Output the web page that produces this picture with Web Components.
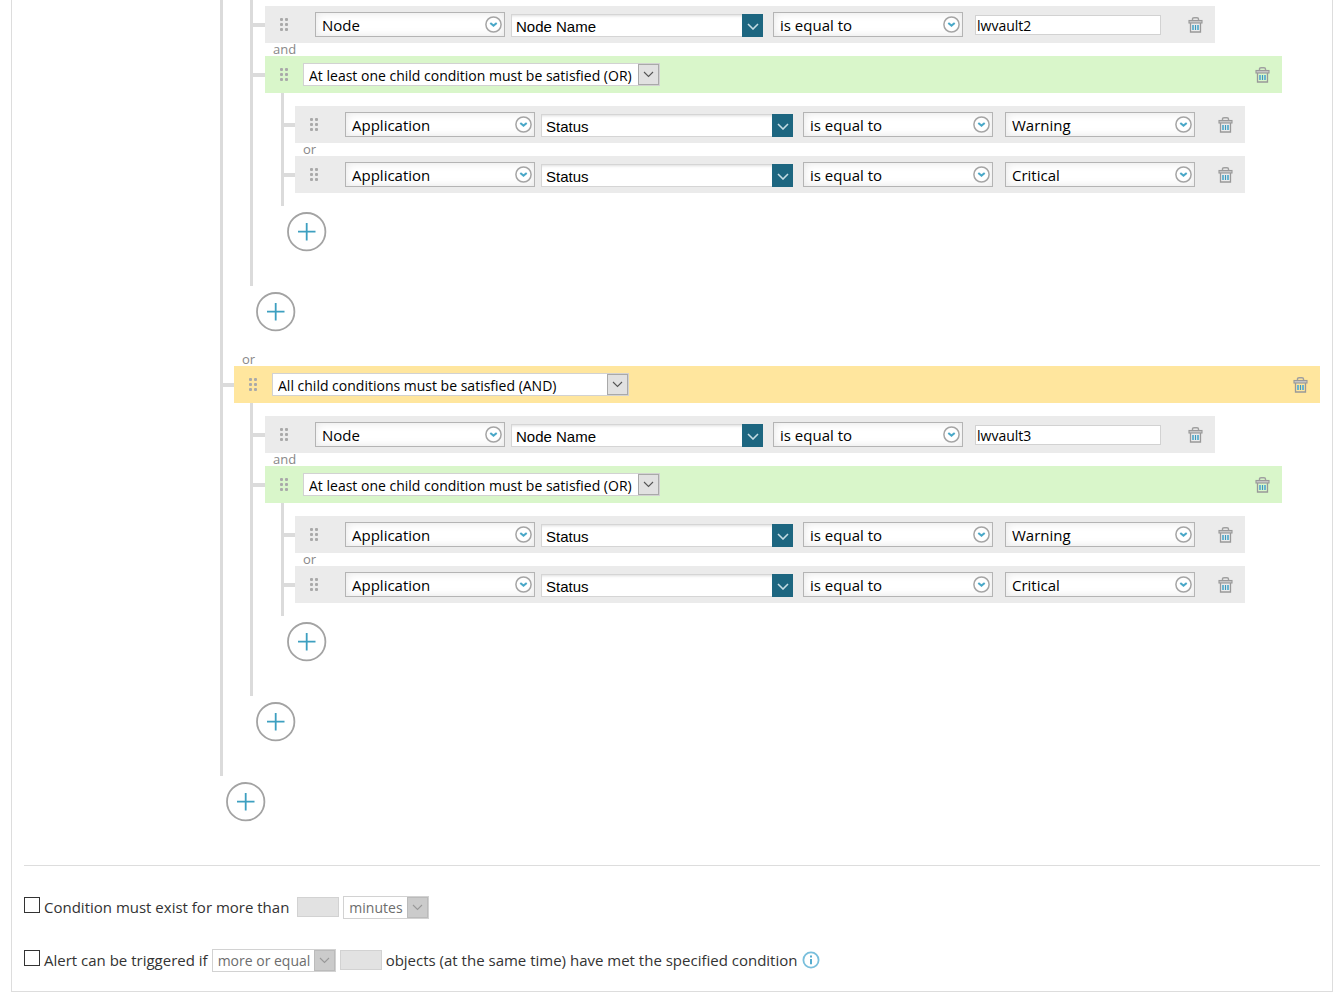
<!DOCTYPE html>
<html lang="en">
<head>
<meta charset="utf-8">
<title>Alert trigger conditions</title>
<style>
  body { margin: 0 9px 6px 11px; background: #fff; color: #333; font: 15px/20px "Open Sans", "Noto Sans", sans-serif; }
</style>
</head>
<body>
<trigger-card>
  <condition-group root>
    <condition-group>
      <condition-row continued object="Node" field="Node Name" text="lwvault2"></condition-row>
      <condition-group nested joiner="and" tone="any" rule="At least one child condition must be satisfied (OR)">
        <condition-row object="Application" field="Status" choice="Warning"></condition-row>
        <condition-row joiner="or" object="Application" field="Status" choice="Critical"></condition-row>
      </condition-group>
    </condition-group>
    <condition-group joiner="or" tone="all" rule="All child conditions must be satisfied (AND)">
      <condition-row object="Node" field="Node Name" text="lwvault3"></condition-row>
      <condition-group nested joiner="and" tone="any" rule="At least one child condition must be satisfied (OR)">
        <condition-row object="Application" field="Status" choice="Warning"></condition-row>
        <condition-row joiner="or" object="Application" field="Status" choice="Critical"></condition-row>
      </condition-group>
    </condition-group>
  </condition-group>
  <trigger-option slot="options" name="duration">
    <span slot="label">Condition must exist for more than</span>
    <count-box slot="controls" label="Duration"></count-box>
    <plain-select slot="controls" size="short" value="minutes" label="Duration unit" disabled></plain-select>
  </trigger-option>
  <trigger-option slot="options" name="count" tight>
    <span slot="label">Alert can be triggered if</span>
    <plain-select slot="controls" size="medium" value="more or equal" label="Comparison" disabled></plain-select>
    <count-box slot="controls" label="Number of objects"></count-box>
    <span slot="controls">objects (at the same time) have met the specified condition</span>
    <info-mark slot="controls"></info-mark>
  </trigger-option>
</trigger-card>

<script>
class Part extends HTMLElement {
  connectedCallback() {
    if (this.shadowRoot) return;
    this.attachShadow({ mode: "open" }).innerHTML =
      `<style>*{box-sizing:border-box}${this.css()}</style>${this.html()}`;
  }
  attr(name) { return this.getAttribute(name) || ""; }
}

customElements.define("trigger-card", class extends Part {
  css() { return `
    :host { display: block; border: 1px solid #ddd; border-top: 0; padding: 0 12px 19px; }
    .tree { margin-left: 196px; }
    hr { border: 0; border-top: 1px solid #ddd; margin: 22px 0 29px; }
    .options { display: flex; flex-direction: column; gap: 29px; }`; }
  html() { return `<div class="tree"><slot></slot></div><hr><div class="options"><slot name="options"></slot></div>`; }
});

/* --reach is the length of the connector from the parent's line to an item. */
const joinerCss = `
  .joiner { height: 13px; padding-left: 8px; font-size: 13px; line-height: 12px; color: #888; }
  .branch { display: flex; align-items: center; margin-left: calc(-1 * var(--reach)); }
  .branch::before { content: ""; flex: none; width: var(--reach); height: 4px; background: #dbdbdb; }`;

customElements.define("condition-group", class extends Part {
  css() { return `${joinerCss}
    :host { display: block; }
    .bar { flex: 1; display: flex; align-items: center; height: 37px; padding: 0 12px 0 15px; background: var(--tone); }
    :host([tone=any]) { --tone: #d9f6ca; }
    :host([tone=all]) { --tone: #ffe69e; }
    :host([nested]) .branch { margin-right: 38px; }
    drag-grip { margin-right: 15px; }
    trash-button { margin-left: auto; }
    .children { --reach: 12px; border-left: 3px solid #dbdbdb; padding: 0 0 13px var(--reach); }
    :host([root]) .children, :host([nested]) .children { --reach: 11px; }
    .body { margin-left: 16px; }
    :host([root]) .body { margin-left: 0; }
    add-button { padding: 6px 0 21px 6px; }`; }
  html() {
    const head = this.hasAttribute("rule") ? `<div class="joiner">${this.attr("joiner")}</div>
      <div class="branch"><div class="bar"><drag-grip></drag-grip>
      <plain-select size="long" value="${this.attr("rule")}" label="Group rule"></plain-select>
      <trash-button></trash-button></div></div>` : "";
    return `${head}<div class="body"><div class="children"><slot></slot></div><add-button></add-button></div>`;
  }
});

customElements.define("condition-row", class extends Part {
  css() { return `${joinerCss}
    :host { display: block; }
    :host([continued]) .joiner { height: 6px; }
    .bar { display: grid; grid-template-columns: 35px 190px 6px 252px 10px 190px 12px 190px 23px 14px;
      align-items: center; height: 37px; padding: 0 13px 0 15px; background: #ebebeb; }
    drag-grip { grid-column: 1; } .object { grid-column: 2; } combo-box { grid-column: 4; }
    .operator { grid-column: 6; } .value { grid-column: 8; } trash-button { grid-column: 10; }
    input { width: 186px; height: 20px; border: 1px solid #d2d2d2; padding: 1px 1px 0; background: #fff; color: #000;
      font: 14px/17px "Open Sans", sans-serif; }`; }
  html() {
    const value = this.hasAttribute("choice")
      ? `<round-select class="value" value="${this.attr("choice")}" label="Value"></round-select>`
      : `<input class="value" type="text" aria-label="Value" value="${this.attr("text")}">`;
    return `<div class="joiner">${this.attr("joiner")}</div><div class="branch"><div class="bar">
      <drag-grip></drag-grip>
      <round-select class="object" value="${this.attr("object")}" label="Object type"></round-select>
      <combo-box value="${this.attr("field")}"></combo-box>
      <round-select class="operator" value="is equal to" label="Operator"></round-select>
      ${value}<trash-button></trash-button></div></div>`;
  }
});

customElements.define("round-select", class extends Part {
  css() { return `
    :host { display: grid; align-items: center; }
    select, svg { grid-area: 1 / 1; }
    select { appearance: none; width: 100%; height: 25px; border: 1px solid #b4b4b4; border-radius: 0; padding: 1px 26px 0 6px;
      background: #fff; box-shadow: inset 0 0 8px #e4e4e4; color: #000; font: 15px/20px "Open Sans", sans-serif; }
    svg { justify-self: end; margin-right: 3px; pointer-events: none; }`; }
  html() { return `<select aria-label="${this.attr("label")}"><option>${this.attr("value")}</option></select>
    <svg width="17" height="18" viewBox="0 0 17 18"><circle cx="8.5" cy="8.5" r="7.6" fill="#fff" stroke="#a5a5a5" stroke-width="1.5"/>
    <path d="M5.3 6.9L8.5 9.6L11.7 6.9" fill="none" stroke="#4aa8c8" stroke-width="2"/></svg>`; }
});

customElements.define("combo-box", class extends Part {
  css() { return `
    :host { display: flex; align-self: end; height: 23px; margin-bottom: 6px; }
    input { flex: 1; min-width: 0; height: 23px; border: 1px solid #d5d5d5; border-right: 0; border-radius: 0; padding: 1px 4px 0;
      background: #fff; box-shadow: inset 0 3px 3px -2px #ddd; color: #000; font: 15px/20px "Liberation Sans", Arial, sans-serif; }
    button { width: 21px; height: 23px; border: 0; padding: 0; background: #1d6680; display: grid; place-items: center; }`; }
  html() { return `<input type="text" aria-label="Field" value="${this.attr("value")}"><button type="button" aria-label="Show fields">
    <svg width="12" height="8" viewBox="0 0 12 8"><path d="M1 2L6 7L11 2" fill="none" stroke="#c5dce3" stroke-width="1.6"/></svg></button>`; }
});

customElements.define("plain-select", class extends Part {
  css() { return `
    :host { display: grid; align-items: center; --ink: #000; --edge: #d2d2d2; --face: #e1e1e1; --rim: #a9a9a9; --mark: #555; }
    :host([disabled]) { --ink: #6d6d6d; --face: #cbcbcb; --rim: #bbb; --mark: #999; }
    :host([size=long]) { width: 357px; }
    :host([size=medium]) { width: 124px; }
    :host([size=short]) { width: 86px; }
    select, .arrow { grid-area: 1 / 1; }
    select { appearance: none; width: 100%; height: 23px; border: 1px solid var(--edge); border-radius: 0; padding: 1px 22px 0 5px;
      background: #fff; color: var(--ink); opacity: 1; font: 14px/19px "Open Sans", sans-serif; }
    .arrow { justify-self: end; width: 21px; height: 21px; margin-right: 1px; border: 1px solid var(--rim); background: var(--face);
      display: grid; place-items: center; pointer-events: none; }`; }
  html() { return `<select aria-label="${this.attr("label")}" ${this.hasAttribute("disabled") ? "disabled" : ""}><option>${this.attr("value")}</option></select>
    <span class="arrow"><svg width="11" height="7" viewBox="0 0 11 7"><path d="M1 1L5.5 5.5L10 1" fill="none" stroke="var(--mark)" stroke-width="1.1"/></svg></span>`; }
});

customElements.define("count-box", class extends Part {
  css() { return `:host { display: block; width: 42px; height: 20px; }
    input { display: block; width: 100%; height: 20px; border: 1px solid #d2d2d2; padding: 0 2px; background: #e2e2e2; }`; }
  html() { return `<input type="text" disabled aria-label="${this.attr("label")}">`; }
});

customElements.define("drag-grip", class extends Part {
  css() { return `:host { display: block; width: 8px; } svg { display: block; }`; }
  html() {
    const dots = [0, 5, 10].map(y => [0, 5].map(x => `<rect x="${x}" y="${y}" width="3" height="3" rx="1"/>`).join("")).join("");
    return `<svg width="8" height="13" viewBox="0 0 8 13" fill="#a9a9a9">${dots}</svg>`;
  }
});

customElements.define("trash-button", class extends Part {
  css() { return `:host { display: block; width: 15px; } button { display: block; border: 0; padding: 0; background: none; } svg { display: block; }`; }
  html() { return `<button type="button" aria-label="Delete"><svg width="15" height="16" viewBox="0 0 15 16" fill="none">
    <path d="M4.5 3V2Q4.5 .8 6 .8H9Q10.5 .8 10.5 2V3" stroke="#a0a0a0" stroke-width="1.4"/>
    <rect x="1" y="3.5" width="13" height="2.5" fill="#c8c8c8" stroke="#999" stroke-width="1.1"/>
    <path d="M2.5 6V15H12.5V6" stroke="#999" stroke-width="1.3"/>
    <path d="M5 8V13M10 8V13" stroke="#6bb5d0" stroke-width="2"/><path d="M7.5 8V13" stroke="#3f98bb" stroke-width="1.2"/></svg></button>`; }
});

customElements.define("add-button", class extends Part {
  css() { return `:host { display: block; } button { display: block; border: 0; padding: 0; background: none; } svg { display: block; }`; }
  html() { return `<button type="button" aria-label="Add condition"><svg width="40" height="40" viewBox="0 0 40 40" fill="none">
    <circle cx="19.7" cy="19.7" r="18.7" fill="#fff" stroke="#a3a3a3" stroke-width="1.8"/>
    <path d="M11 19.7H28.5M19.7 11V28.5" stroke="#3d9fc0" stroke-width="1.8"/></svg></button>`; }
});

customElements.define("info-mark", class extends Part {
  css() { return `:host { display: block; margin-left: 1px; } svg { display: block; }`; }
  html() { return `<svg role="img" aria-label="Information" width="18" height="18" viewBox="0 0 18 18" fill="none">
    <circle cx="9" cy="9" r="7.6" stroke="#79bfdc" stroke-width="1.8"/>
    <path d="M9 4.5V6.5M9 8V13.2" stroke="#55accf" stroke-width="2"/></svg>`; }
});

customElements.define("trigger-option", class extends Part {
  css() { return `
    :host { display: flex; align-items: center; gap: 4px; height: 24px; }
    input { appearance: none; flex: none; width: 16px; height: 16px; margin: 0 0 4px; border: 1px solid #333; background: #fff; }
    label { margin-right: 4px; white-space: nowrap; }
    :host([tight]) label { margin-right: 0; }`; }
  html() { return `<input type="checkbox" id="${this.attr("name")}"><label for="${this.attr("name")}"><slot name="label"></slot></label><slot name="controls"></slot>`; }
});
</script>
</body>
</html>
